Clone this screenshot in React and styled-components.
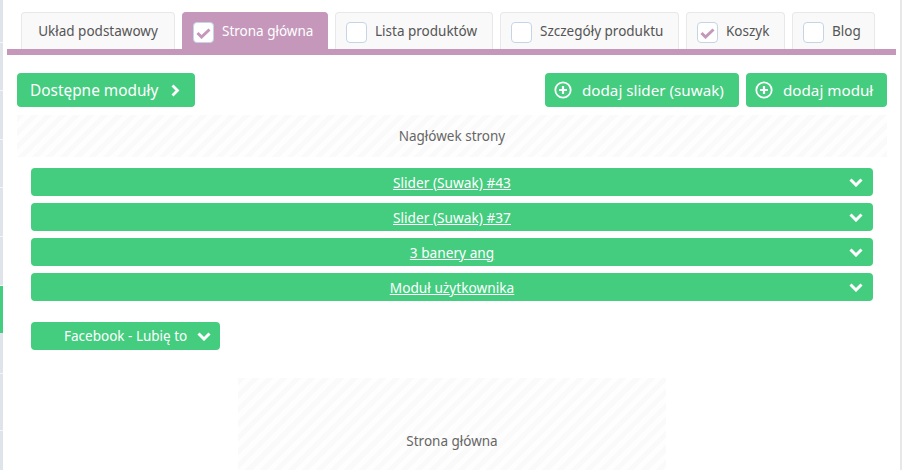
import React from "react";
import styled, { createGlobalStyle } from "styled-components";

const GREEN = "#44cc7f";
const MAUVE = "#c497bb";

const Global = createGlobalStyle`
  html, body { margin: 0; padding: 0; background: #fff; height: 100%; overflow: hidden; }
  body { font-family: "Noto Sans", "Open Sans", sans-serif; }
  * { box-sizing: border-box; }
`;

const Page = styled.div`
  width: 902px;
  height: 470px;
  display: flex;
  overflow: hidden;
`;

const LeftRail = styled.div`
  width: 3px;
  flex: none;
  background: #dfe4ea;
  display: flex;
  flex-direction: column;
`;

const RailRow = styled.div`
  flex: none;
  height: ${({ $h }) => $h}px;
  background: ${({ $active }) => ($active ? GREEN : "#dfe4ea")};
  border-bottom: 1px solid ${({ $active }) => ($active ? GREEN : "#f3f5f7")};
`;

const Main = styled.div`
  width: 897px;
  flex: none;
  padding: 12px 4px 0;
`;

const RightRail = styled.div`
  flex: 1;
  background: #e8e8e8;
`;

const Tabs = styled.div`
  display: flex;
  gap: 7px;
  height: 43px;
  padding-left: 14px;
  border-bottom: 6px solid ${MAUVE};
`;

const Tab = styled.div`
  width: ${({ $w }) => $w}px;
  height: 37px;
  flex: none;
  display: flex;
  align-items: flex-start;
  justify-content: ${({ $plain }) => ($plain ? "center" : "flex-start")};
  padding: 9px 0 0 ${({ $plain }) => ($plain ? 0 : 10)}px;
  border: 1px solid ${({ $active }) => ($active ? MAUVE : "#e8e8e8")};
  border-bottom: 0;
  border-radius: 4px 4px 0 0;
  background: ${({ $active }) => ($active ? MAUVE : "#f9f9f9")};
  color: ${({ $active }) => ($active ? "#fff" : "#555")};
  font-size: 13.5px;
  line-height: 18px;
  white-space: nowrap;
`;

const Check = styled.span`
  width: 21px;
  height: 21px;
  flex: none;
  margin: 0 8px 0 0;
  background: #fff;
  border: 1px solid #c5d5e6;
  border-radius: 4px;
  display: flex;
  align-items: center;
  justify-content: center;
`;

const Toolbar = styled.div`
  display: flex;
  align-items: center;
  gap: 7px;
  padding: 18px 9px 0 10px;
`;

const Button = styled.div`
  height: 34px;
  display: flex;
  align-items: center;
  background: ${GREEN};
  color: #fff;
  border-radius: 4px;
  font-size: 15.4px;
  white-space: nowrap;
`;

const AvailableButton = styled(Button)`
  width: 178px;
  padding-left: 13px;
  margin-right: auto;
  gap: 13px;
`;

const AddButton = styled(Button)`
  width: ${({ $w }) => $w}px;
  padding-left: 9px;
  gap: 10px;
  font-size: 15.2px;
`;

const Hatched = styled.div`
  background-color: #fff;
  background-image: repeating-linear-gradient(
    135deg,
    #fafafa 0,
    #fafafa 5px,
    #fefefe 5px,
    #fefefe 10px
  );
  color: #666;
  font-size: 13.5px;
  display: flex;
  justify-content: center;
`;

const HeaderZone = styled(Hatched)`
  height: 42px;
  margin: 8px 9px 0 10px;
  align-items: center;
`;

const Modules = styled.div`
  display: flex;
  flex-direction: column;
  gap: 7px;
  padding: 11px 23px 0 24px;
`;

const ModuleBar = styled.div`
  height: 28px;
  position: relative;
  display: flex;
  align-items: center;
  justify-content: center;
  background: ${GREEN};
  color: #fff;
  border-radius: 4px;
  font-size: 13.7px;
  text-decoration: underline;
`;

const BarChevron = styled.span`
  position: absolute;
  right: 10px;
  top: 10px;
  display: flex;
`;

const FacebookRow = styled.div`
  padding: 21px 0 0 24px;
`;

const FacebookPill = styled.div`
  width: 189px;
  height: 28px;
  display: flex;
  align-items: center;
  gap: 10px;
  padding-left: 33px;
  background: ${GREEN};
  color: #fff;
  border-radius: 4px;
  font-size: 13.5px;
  white-space: nowrap;
`;

const ContentRow = styled.div`
  display: flex;
  padding: 28px 0 0 231px;
`;

const ContentZone = styled(Hatched)`
  width: 428px;
  height: 92px;
  align-items: flex-end;
  padding-bottom: 20px;
`;

const Tick = () => (
  <svg width="15" height="12" viewBox="0 0 15 12">
    <path d="M1.5 6 L5.5 10 L13.5 2.5" fill="none" stroke={MAUVE} strokeWidth="3" />
  </svg>
);

const Down = () => (
  <svg width="14" height="9" viewBox="0 0 14 9">
    <path d="M1.5 1.5 L7 7 L12.5 1.5" fill="none" stroke="#fff" strokeWidth="3" />
  </svg>
);

const Right = () => (
  <svg width="9" height="13" viewBox="0 0 9 13">
    <path d="M1.5 1.5 L6.5 6.5 L1.5 11.5" fill="none" stroke="#fff" strokeWidth="2.8" />
  </svg>
);

const Plus = () => (
  <svg width="18" height="18" viewBox="0 0 18 18">
    <circle cx="9" cy="9" r="7.7" fill="none" stroke="#fff" strokeWidth="1.8" />
    <path d="M9 5 V13 M5 9 H13" stroke="#fff" strokeWidth="2.2" />
  </svg>
);

const railRows = [
  { h: 43 },
  { h: 48 },
  { h: 49 },
  { h: 48 },
  { h: 49 },
  { h: 49 },
  { h: 47, active: true },
  { h: 41 },
  { h: 57 },
];

const tabs = [
  { label: "Układ podstawowy", w: 154, plain: true },
  { label: "Strona główna", w: 146, active: true, ticked: true },
  { label: "Lista produktów", w: 158 },
  { label: "Szczegóły produktu", w: 179 },
  { label: "Koszyk", w: 99, ticked: true },
  { label: "Blog", w: 83 },
];

const modules = ["Slider (Suwak) #43", "Slider (Suwak) #37", "3 banery ang", "Moduł użytkownika"];

export default function App() {
  return (
    <Page>
      <Global />
      <LeftRail>
        {railRows.map((r, i) => (
          <RailRow key={i} $h={r.h} $active={r.active} />
        ))}
      </LeftRail>
      <Main>
        <Tabs>
          {tabs.map((t) => (
            <Tab key={t.label} $w={t.w} $plain={t.plain} $active={t.active}>
              {!t.plain && <Check>{t.ticked && <Tick />}</Check>}
              {t.label}
            </Tab>
          ))}
        </Tabs>
        <Toolbar>
          <AvailableButton>
            Dostępne moduły
            <Right />
          </AvailableButton>
          <AddButton $w={194}>
            <Plus />
            dodaj slider (suwak)
          </AddButton>
          <AddButton $w={141}>
            <Plus />
            dodaj moduł
          </AddButton>
        </Toolbar>
        <HeaderZone>Nagłówek strony</HeaderZone>
        <Modules>
          {modules.map((m) => (
            <ModuleBar key={m}>
              {m}
              <BarChevron>
                <Down />
              </BarChevron>
            </ModuleBar>
          ))}
        </Modules>
        <FacebookRow>
          <FacebookPill>
            Facebook - Lubię to
            <Down />
          </FacebookPill>
        </FacebookRow>
        <ContentRow>
          <ContentZone>Strona główna</ContentZone>
        </ContentRow>
      </Main>
      <RightRail />
    </Page>
  );
}
